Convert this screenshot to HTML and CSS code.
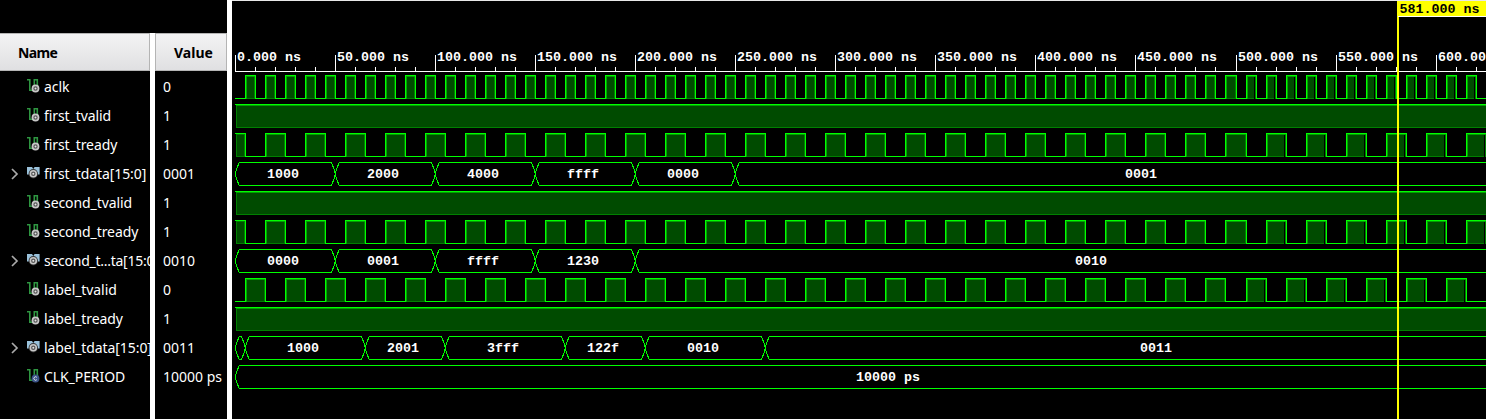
FILE: index.html
```html
<!DOCTYPE html>
<html lang="en">
<head>
<meta charset="utf-8">
<title>Waveform</title>
<link rel="stylesheet" href="styles.css">
</head>
<body>
<svg class="defs" width="0" height="0">
  <symbol id="scalar" viewBox="0 0 13 14">
    <path d="M0 .8H2.8V11.3H6M7.3 10V.8H10.3V8" fill="none" stroke="#2e9641" stroke-width="1.6"/>
    <circle cx="8.5" cy="9.5" r="3.9" fill="#c8c8c8"/><circle cx="8.5" cy="9.5" r="1.6" fill="#e4e4e4" stroke="#555" stroke-width="1.2"/>
  </symbol>
  <symbol id="constant" viewBox="0 0 13 14">
    <path d="M0 .8H2.8V11.3H6M7.3 10V.8H10.3V8" fill="none" stroke="#2e9641" stroke-width="1.6"/>
    <circle cx="8.5" cy="9.5" r="3.9" fill="#3b5488"/><path d="M9.8 8.3A1.7 1.7 0 1 0 9.8 10.7" fill="none" stroke="#eee"/>
  </symbol>
  <symbol id="bus" viewBox="0 0 13 14">
    <path d="M0 1H5L6.3 3L7.6 1H12.6V8.6H0Z" fill="#9ac2db"/>
    <circle cx="6.3" cy="7.7" r="4.7" fill="#333"/>
    <circle cx="6.3" cy="7.7" r="3.8" fill="#c8c8c8"/><circle cx="6.3" cy="7.7" r="1.6" fill="#e4e4e4" stroke="#555" stroke-width="1.2"/>
  </symbol>
</svg>
<main class="viewer">
  <section class="names"><h2 class="head">Name</h2><div class="rows" id="names"></div></section>
  <section class="values"><h2 class="head">Value</h2><div class="rows" id="values"></div></section>
  <section class="wave"><svg id="wave" width="1254" height="419" viewBox="232 0 1254 419"></svg></section>
</main>
<script src="wave.js"></script>
</body>
</html>
```
FILE: styles.css
```css
body { margin: 0; background: #000; overflow: hidden; }
.defs { position: absolute; }
.viewer { display: grid; grid-template-columns: 150px 72px 1254px; column-gap: 5px; width: 1486px; height: 419px; background: #000; }
.names, .values { padding-top: 33px; overflow: hidden; font-family: "Noto Sans", sans-serif; }
.names { box-shadow: 5px 0 0 #fff; clip-path: inset(33px -5px 0 0); }
.values { box-shadow: 5px 0 0 #fff; }
.head { box-sizing: border-box; height: 38px; margin: 0; padding-left: 18px; border: 1px solid #b4b4b4; border-left: 0; background: linear-gradient(#f3f3f4, #e0e0e2); color: #000; font-size: 14px; font-weight: 700; line-height: 37px; letter-spacing: -.6px; }
.values .head { border-left: 1px solid #b4b4b4; letter-spacing: 0; }
.rows { padding-top: 1px; }
.row { display: flex; align-items: center; height: 29px; color: #fff; font-size: 14px; line-height: 29px; white-space: nowrap; }
.arrow { flex: none; width: 8px; height: 12px; margin: 0 8px 0 11px; fill: none; stroke: #aaa; stroke-width: 1.7; }
.icon { flex: none; width: 13px; height: 14px; margin: 0 4px 1px 0; }
.label { letter-spacing: -.08px; }
.values .row { padding-left: 8px; }
.wave svg { display: block; }
.tick, .bus { font: bold 13.33px "Liberation Mono", monospace; fill: #fff; white-space: pre; }
.cursor-label { fill: #000; }
```
FILE: wave.js
```js
const signals = [
  ["aclk", "0", "scalar"], ["first_tvalid", "1", "scalar"], ["first_tready", "1", "scalar"],
  ["first_tdata[15:0]", "0001", "bus"], ["second_tvalid", "1", "scalar"], ["second_tready", "1", "scalar"],
  ["second_t...ta[15:0]", "0010", "bus"], ["label_tvalid", "0", "scalar"], ["label_tready", "1", "scalar"],
  ["label_tdata[15:0]", "0011", "bus"], ["CLK_PERIOD", "10000 ps", "constant"]
];
let names = "", values = "", out = "";
for (const [name, value, kind] of signals) {
  const arrow = kind === "bus" ? '<path d="M1 1L6 6L1 11"/>' : "";
  const tight = name.includes("...") ? ' style="letter-spacing:-.26px"' : "";
  names += `<div class="row"><svg class="arrow">${arrow}</svg><svg class="icon"><use href="#${kind}"/></svg><span class="label"${tight}>${name}</span></div>`;
  values += `<div class="row">${value}</div>`;
}
document.getElementById("names").innerHTML = names;
document.getElementById("values").innerHTML = values;

const px = ns => Math.floor(235 + ns * 2.002);
const rect = (x, y, w, h, c) => { out += `<rect x="${x}" y="${y}" width="${w}" height="${h}" fill="${c}"/>`; };
const text = (x, y, s, cls) => { out += `<text x="${x}" y="${y}" class="${cls}">${s}</text>`; };
const END = 1486, LIME = "#00ff00";

rect(232, 0, 1254, 1, "#e8e8e8");
rect(235, 71, 1251, 1, "#fff");
for (let ns = 0; ns <= 620; ns += 10) {
  const major = ns % 50 === 0;
  rect(px(ns), major ? 55 : 67, 1, major ? 16 : 4, "#fff");
  if (major) text(px(ns) + 2, 61, ns + ".000 ns", "tick");
}

function pulse(a, b, y) {
  rect(a, y, b - a + 1, 24, LIME);
  rect(a + 1, y + 1, b - a - 1, 23, "#008000");
  rect(a + 1, y + 1, 1, 23, "#00a800");
  rect(a + 1, y + 1, b - a - 1, 1, "#00a000");
  rect(a + 2, y + 2, b - a - 3, 21, "#004b00");
  if (a > 1225) rect(b - 2, y + 2, 1, 22, "#000");
}
function clock(y, first, high, period) {
  rect(235, y + 23, 1251, 1, LIME);
  for (let t = first; t < 625; t += period) {
    if (t < 0) {
      rect(235, y, 11, 24, LIME); rect(235, y + 1, 10, 23, "#000");
      rect(236, y + 1, 9, 23, "#008000"); rect(237, y + 2, 7, 21, "#004b00");
    } else pulse(px(t), px(t + high), y);
  }
}
function solid(y) {
  rect(236, y + 1, 1250, 23, "#008000");
  rect(237, y + 2, 1249, 21, "#004b00");
  rect(235, y, 1251, 1, LIME); rect(236, y + 1, 1250, 1, "#00a000");
}
function bus(y, changes, labels) {
  const p = [235, ...changes.map(px), END + 10];
  for (let i = 0; i < p.length - 1; i++) {
    const a = p[i] + .3, b = p[i + 1] + .3, t = y + .5;
    out += `<path d="M${a} ${t+11.5}L${a+1} ${t+7}L${a+4} ${t}H${b-4}L${b-1} ${t+7}L${b} ${t+11.5}L${b-1} ${t+16}L${b-4} ${t+23}H${a+4}L${a+1} ${t+16}Z" fill="none" stroke="#00ff00" shape-rendering="crispEdges"/>`;
  }
  for (const [x, s] of labels) text(x, y + 16, s, "bus");
}
clock(75, 5, 5, 10);
solid(104);
clock(133, -5, 10, 20);
bus(162, [50, 100, 150, 200, 250], [[267,"1000"],[367,"2000"],[467,"4000"],[567,"ffff"],[667,"0000"],[1125,"0001"]]);
solid(191);
clock(220, -5, 10, 20);
bus(249, [50, 100, 150, 200], [[267,"0000"],[367,"0001"],[467,"ffff"],[567,"1230"],[1075,"0010"]]);
clock(278, 5, 10, 20);
solid(307);
bus(336, [5, 65, 105, 165, 205, 265], [[287,"1000"],[387,"2001"],[487,"3fff"],[587,"122f"],[687,"0010"],[1140,"0011"]]);
bus(365, [], [[856,"10000 ps"]]);

rect(1397, 1, 2, 418, "#ffff00");
rect(1397, 1, 89, 15, "#ffff00");
rect(1398, 16, 88, 1, "#fff");
text(1399.5, 13, "581.000 ns", "tick cursor-label");
document.getElementById("wave").innerHTML = out;
```
